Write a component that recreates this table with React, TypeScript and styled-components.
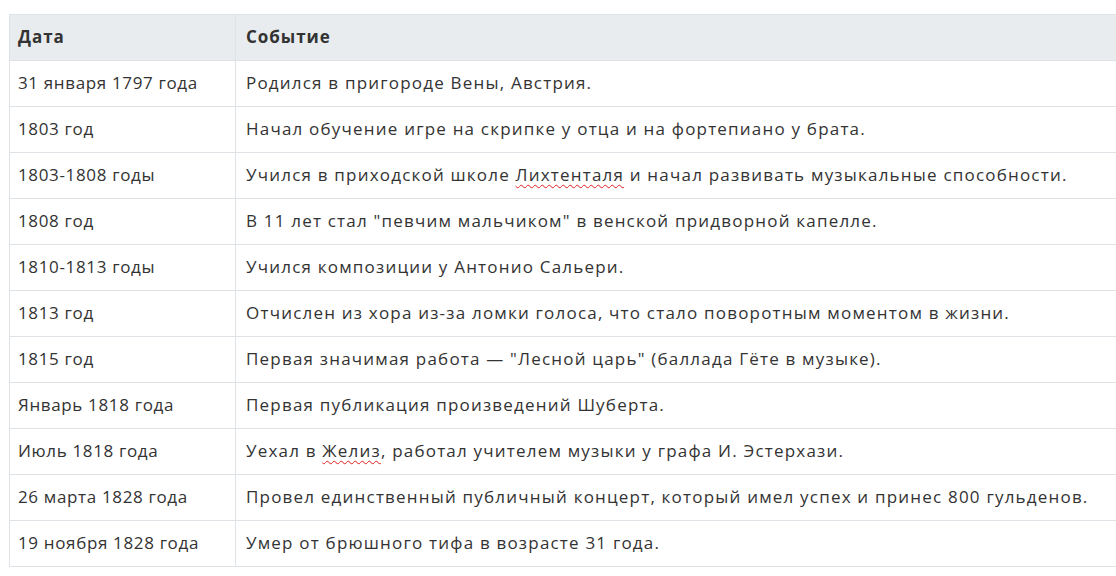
import React from "react";
import styled, { createGlobalStyle } from "styled-components";

const Global = createGlobalStyle`
  html, body { margin: 0; padding: 0; background: #fff; overflow: hidden; }
  body { font-family: "Open Sans", "Noto Sans", sans-serif; }
`;

const Page = styled.div`
  padding: 14px 0 0 9px;
  width: 1130px;
`;

const Table = styled.table`
  border-collapse: collapse;
  width: 1125px;
  color: #333;
  font-size: 17px;
  letter-spacing: 1.2px;
`;

const Th = styled.th<{ $w?: number }>`
  background: #e8ecef;
  border: 1px solid #dfe2e6;
  text-align: left;
  font-weight: 700;
  height: 46px;
  box-sizing: border-box;
  padding: 0 10px 2px;
  letter-spacing: 0.95px;
  width: ${(p) => (p.$w ? `${p.$w}px` : "auto")};
  &:first-child { padding-left: 8px; }
`;

const Td = styled.td`
  border: 1px solid #dfe2e6;
  height: 46px;
  box-sizing: border-box;
  padding: 0 10px 2px;
  font-weight: 400;
  &:first-child { padding-left: 8px; letter-spacing: 0.65px; }
`;

const Misspelled = styled.span`
  text-decoration: underline wavy #e02020;
  text-decoration-thickness: 1px;
  text-underline-offset: 3px;
`;

const rows: [string, React.ReactNode][] = [
  ["31 января 1797 года", "Родился в пригороде Вены, Австрия."],
  ["1803 год", "Начал обучение игре на скрипке у отца и на фортепиано у брата."],
  [
    "1803-1808 годы",
    <>Учился в приходской школе <Misspelled>Лихтенталя</Misspelled> и начал развивать музыкальные способности.</>,
  ],
  ["1808 год", 'В 11 лет стал "певчим мальчиком" в венской придворной капелле.'],
  ["1810-1813 годы", "Учился композиции у Антонио Сальери."],
  ["1813 год", "Отчислен из хора из-за ломки голоса, что стало поворотным моментом в жизни."],
  ["1815 год", 'Первая значимая работа — "Лесной царь" (баллада Гёте в музыке).'],
  ["Январь 1818 года", "Первая публикация произведений Шуберта."],
  [
    "Июль 1818 года",
    <>Уехал в <Misspelled>Желиз</Misspelled>, работал учителем музыки у графа И. Эстерхази.</>,
  ],
  ["26 марта 1828 года", "Провел единственный публичный концерт, который имел успех и принес 800 гульденов."],
  ["19 ноября 1828 года", "Умер от брюшного тифа в возрасте 31 года."],
];

export default function App() {
  return (
    <>
      <Global />
      <Page>
        <Table>
          <thead>
            <tr>
              <Th $w={226}>Дата</Th>
              <Th>Событие</Th>
            </tr>
          </thead>
          <tbody>
            {rows.map(([d, e], i) => (
              <tr key={i}>
                <Td>{d}</Td>
                <Td>{e}</Td>
              </tr>
            ))}
          </tbody>
        </Table>
      </Page>
    </>
  );
}
